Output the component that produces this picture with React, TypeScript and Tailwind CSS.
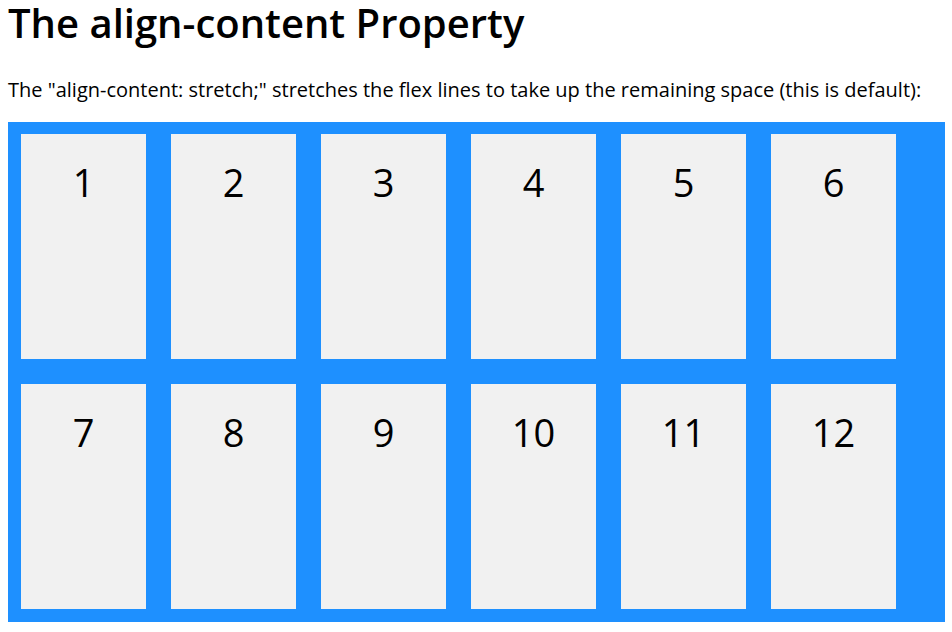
const items = Array.from({ length: 12 }, (_, index) => index + 1);

export default function App() {
  return (
    <main className="bg-white pr-[7px] pb-2 pl-2 font-['Open_Sans','Noto_Sans',sans-serif] text-black">
      <h1 className="text-[40px] leading-[46px] font-semibold">The align-content Property</h1>
      <p className="mt-8 text-[20px] leading-6">
        The "align-content: stretch;" stretches the flex lines to take up the remaining space (this is default):
      </p>
      <div className="mt-5 flex min-h-[500px] flex-wrap content-stretch bg-[#1e90ff] pl-px">
        {items.map((item) => (
          <div key={item} className="mt-3 mr-[13px] mb-[13px] ml-3 w-[125px] bg-[#f1f1f1] text-center text-[38px] leading-[96px]">
            {item}
          </div>
        ))}
      </div>
    </main>
  );
}
